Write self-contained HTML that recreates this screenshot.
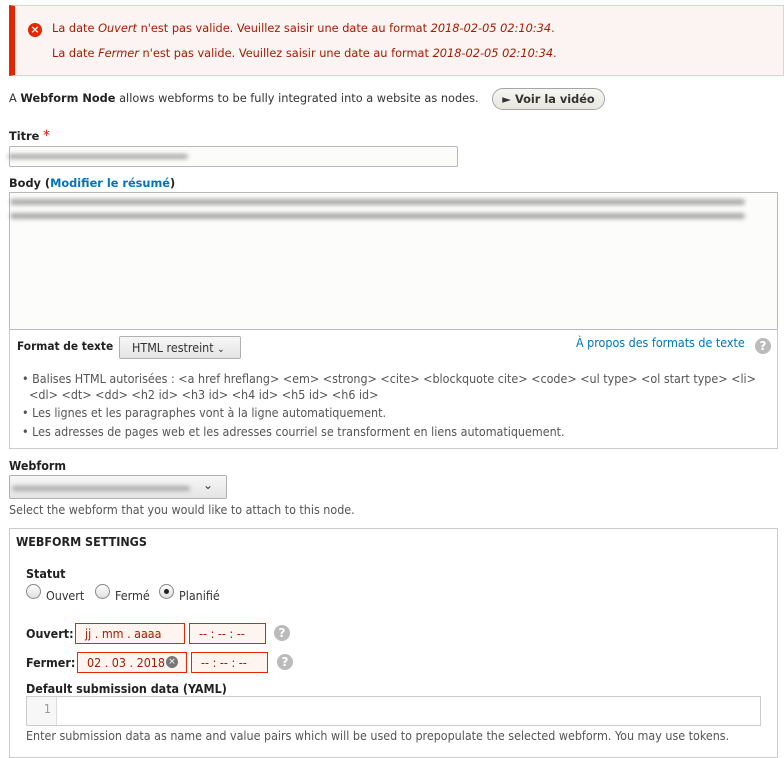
<!DOCTYPE html>
<html><head><meta charset="utf-8"><style>
*{margin:0;padding:0;box-sizing:border-box}
body{width:784px;height:747px;overflow:hidden;background:#fff;font-family:"DejaVu Sans",sans-serif;font-size:11.35px;color:#333;position:relative}
.a{position:absolute;white-space:nowrap}
.c{font-family:"DejaVu Sans Condensed","DejaVu Sans",sans-serif;font-size:12.4px}
b{font-weight:bold;color:#222}
.blur{position:absolute;background:#aaa;filter:blur(2px);height:5px;border-radius:3px}
.q{position:absolute;width:16px;height:16px;border-radius:50%;background:#bbb;color:#fff;font-weight:bold;font-size:12px;text-align:center;line-height:16px}
.inp{position:absolute;border:1px solid #e62600;background:#fef5f1;color:#a51b00;padding-left:9px;line-height:19px}
.rad{position:absolute;width:15px;height:15px;border:1px solid #888;border-radius:50%;background:linear-gradient(#fff,#ddd)}
</style></head><body>
<div class="a" style="left:9px;top:5px;width:775px;height:71px;background:#fcf4f2;border:1px solid #f9c9bf;border-left:6px solid #e62600"></div>
<div class="a" style="left:28px;top:23px;width:14px;height:14px;border-radius:50%;background:#e32700;color:#fff;font-size:11px;font-weight:bold;text-align:center;line-height:14px">×</div>
<div class="a" style="left:52px;top:21px;color:#a51b00">La date <i>Ouvert</i> n'est pas valide. Veuillez saisir une date au format <i>2018-02-05 02:10:34</i>.</div>
<div class="a" style="left:52px;top:46px;color:#a51b00">La date <i>Fermer</i> n'est pas valide. Veuillez saisir une date au format <i>2018-02-05 02:10:34</i>.</div>

<div class="a" style="left:9px;top:91px">A <b>Webform Node</b> allows webforms to be fully integrated into a website as nodes.</div>
<div class="a" style="left:492px;top:88px;width:113px;height:22px;border:1px solid #a6a6a6;border-radius:12px;background:linear-gradient(#f6f6f3,#e7e7df);font-weight:bold;color:#333;text-align:center;line-height:20px">► Voir la vidéo</div>

<div class="a" style="left:9px;top:128px"><b>Titre</b> <span style="color:#e00;font-size:14px">*</span></div>
<div class="a" style="left:9px;top:146px;width:449px;height:21px;border:1px solid #b8b8b8;border-radius:2px;background:#fcfcfa"></div>
<div class="blur" style="left:8px;top:154px;width:180px"></div>

<div class="a" style="left:9px;top:176px"><b>Body (<span style="color:#0074bd">Modifier le résumé</span>)</b></div>
<div class="a" style="left:9px;top:192px;width:769px;height:138px;border:1px solid #b8b8b8;background:#fcfcfa"></div>
<div class="blur" style="left:10px;top:199px;width:735px;height:6px"></div>
<div class="blur" style="left:10px;top:213px;width:735px;height:6px"></div>

<div class="a" style="left:9px;top:329px;width:769px;height:120px;border:1px solid #ccc;border-top:none"></div>
<div class="a c" style="left:17px;top:339px;font-weight:bold;color:#222;font-size:11.8px">Format de texte</div>
<div class="a c" style="left:119px;top:336px;width:122px;height:23px;border:1px solid #b0b0b0;border-radius:2px;background:linear-gradient(#f7f7f7,#e4e4e4);line-height:21px;padding-left:12px;color:#333">HTML restreint <span style="font-size:10px">⌄</span></div>
<div class="a c" style="left:576px;top:335px;color:#0074bd">À propos des formats de texte</div>
<div class="q" style="left:755px;top:338px">?</div>
<div class="a c" style="left:22px;top:371px;color:#555;line-height:16px">• Balises HTML autorisées : &lt;a href hreflang&gt; &lt;em&gt; &lt;strong&gt; &lt;cite&gt; &lt;blockquote cite&gt; &lt;code&gt; &lt;ul type&gt; &lt;ol start type&gt; &lt;li&gt;<br>&nbsp;&nbsp;&lt;dl&gt; &lt;dt&gt; &lt;dd&gt; &lt;h2 id&gt; &lt;h3 id&gt; &lt;h4 id&gt; &lt;h5 id&gt; &lt;h6 id&gt;</div>
<div class="a c" style="left:22px;top:405px;color:#555">• Les lignes et les paragraphes vont à la ligne automatiquement.</div>
<div class="a c" style="left:22px;top:424px;color:#555">• Les adresses de pages web et les adresses courriel se transforment en liens automatiquement.</div>

<div class="a c" style="left:9px;top:458px"><b>Webform</b></div>
<div class="a" style="left:9px;top:475px;width:218px;height:24px;border:1px solid #b0b0b0;border-radius:2px;background:linear-gradient(#f7f7f7,#e4e4e4)"></div>
<div class="blur" style="left:12px;top:486px;width:178px"></div>
<div class="a" style="left:203px;top:478px;font-size:12px">⌄</div>
<div class="a c" style="left:9px;top:502px;color:#555">Select the webform that you would like to attach to this node.</div>

<div class="a" style="left:9px;top:528px;width:769px;height:230px;border:1px solid #ccc"></div>
<div class="a c" style="left:16px;top:534px"><b>WEBFORM SETTINGS</b></div>
<div class="a c" style="left:26px;top:566px"><b>Statut</b></div>
<div class="rad" style="left:26px;top:584px"></div>
<div class="a c" style="left:46px;top:588px">Ouvert</div>
<div class="rad" style="left:95px;top:584px"></div>
<div class="a c" style="left:115px;top:588px">Fermé</div>
<div class="rad" style="left:159px;top:584px"><span style="position:absolute;left:4px;top:4px;width:5px;height:5px;border-radius:50%;background:#222"></span></div>
<div class="a c" style="left:179px;top:588px">Planifié</div>

<div class="a c" style="left:26px;top:626px"><b>Ouvert:</b></div>
<div class="inp c" style="left:75px;top:623px;width:110px;height:21px">jj . mm . aaaa</div>
<div class="inp c" style="left:189px;top:623px;width:77px;height:21px">-- : -- : --</div>
<div class="q" style="left:274px;top:625px">?</div>
<div class="a c" style="left:26px;top:655px"><b>Fermer:</b></div>
<div class="inp c" style="left:77px;top:652px;width:110px;height:21px">02 . 03 . 2018</div>
<div class="a" style="left:166px;top:656px;width:12px;height:12px;border-radius:50%;background:#777;color:#fff;font-size:9px;text-align:center;line-height:12px">×</div>
<div class="inp c" style="left:191px;top:652px;width:77px;height:21px">-- : -- : --</div>
<div class="q" style="left:277px;top:654px">?</div>

<div class="a c" style="left:26px;top:681px"><b>Default submission data (YAML)</b></div>
<div class="a" style="left:26px;top:696px;width:735px;height:30px;border:1px solid #ccc;background:#fff"></div>
<div class="a c" style="left:27px;top:697px;width:30px;height:28px;background:#f7f7f7;border-right:1px solid #ddd;color:#999;text-align:right;padding-right:5px;line-height:24px">1</div>
<div class="a c" style="left:26px;top:728px;color:#555">Enter submission data as name and value pairs which will be used to prepopulate the selected webform. You may use tokens.</div>
</body></html>
